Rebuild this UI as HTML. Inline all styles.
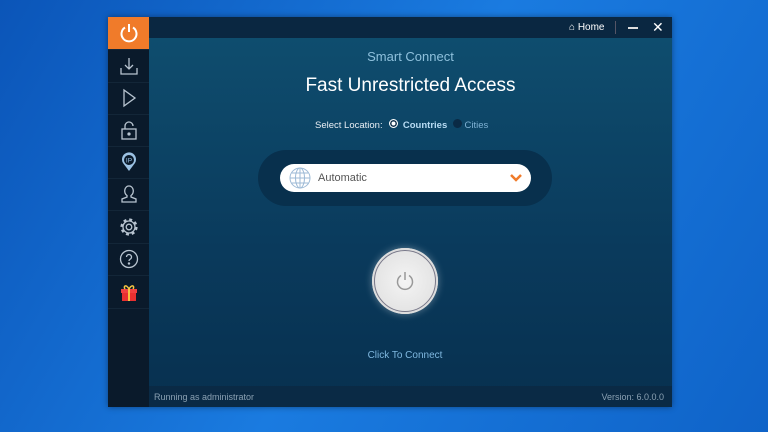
<!DOCTYPE html><html><head><style>
body{margin:0;width:768px;height:432px;overflow:hidden;background:linear-gradient(120deg,#0b55b8 0%,#1a7be0 50%,#0f63c8 100%);font-family:"Liberation Sans",sans-serif;position:relative}
.win{position:absolute;left:108px;top:17px;width:564px;height:390px;background:linear-gradient(#0f4f70,#0a3a5c 60%,#07304f);box-shadow:0 0 6px rgba(0,0,0,.4)}
.side{position:absolute;left:0;top:0;width:41px;height:390px;background:#0a1a2b}
.it{position:absolute;left:0;width:41px;height:32px;border-bottom:1px solid #132638;display:flex;align-items:center;justify-content:center}
.tb{position:absolute;left:41px;top:0;right:0;height:21px;background:#0a2741;color:#fff;font-size:10px}
.st{position:absolute;left:41px;bottom:0;right:0;height:21px;background:#0a2a45;color:#8aa0b2;font-size:9px}
.c{position:absolute;text-align:center}
</style></head><body>
<div class="win">
<div class="side">
<div class="it" style="top:0;background:#f07b2a"><svg width="22" height="22" viewBox="0 0 22 22" fill="none" stroke="#fff" stroke-width="2"><path d="M7 5.5A7.5 7.5 0 1 0 15 5.5"/><path d="M11 2v8"/></svg></div>
<div class="it" style="top:33px"><svg width="20" height="20" viewBox="0 0 20 20" fill="none" stroke="#b8c4d0" stroke-width="1.3"><path d="M10 2v11M6 9l4 4 4-4M2 12v6h16v-6"/></svg></div>
<div class="it" style="top:65px"><svg width="20" height="20" viewBox="0 0 20 20" fill="none" stroke="#b8c4d0" stroke-width="1.3"><path d="M5 2v16l11-8z"/></svg></div>
<div class="it" style="top:97px"><svg width="20" height="20" viewBox="0 0 20 20" fill="none" stroke="#b8c4d0" stroke-width="1.3"><rect x="3" y="9" width="14" height="10"/><path d="M6 9V6a4 4 0 0 1 8 0"/><circle cx="10" cy="14" r="1" fill="#b8c4d0"/></svg></div>
<div class="it" style="top:129px"><svg width="20" height="20" viewBox="0 0 20 20"><path d="M10 19l-6-8a7 7 0 1 1 12 0z" fill="#9cc2e4"/><circle cx="10" cy="8" r="5" fill="#0a1a2b"/><text x="10" y="10.5" font-size="6.5" fill="#9cc2e4" text-anchor="middle" font-family="Liberation Sans">IP</text></svg></div>
<div class="it" style="top:161px"><svg width="20" height="20" viewBox="0 0 20 20" fill="none" stroke="#b8c4d0" stroke-width="1.3"><path d="M10 2a4 5 0 0 0-2 9.5V13l-5 2v3h14v-3l-5-2v-1.5A4 5 0 0 0 10 2z"/></svg></div>
<div class="it" style="top:194px"><svg width="20" height="20" viewBox="0 0 20 20" fill="none" stroke="#b8c4d0"><circle cx="10" cy="10" r="2.8" stroke-width="1.3"/><circle cx="10" cy="10" r="6" stroke-width="1.3"/><circle cx="10" cy="10" r="7.3" stroke-width="2.6" stroke-dasharray="2.9 2.83"/></svg></div>
<div class="it" style="top:226px"><svg width="20" height="20" viewBox="0 0 20 20" fill="none" stroke="#b8c4d0" stroke-width="1.3"><circle cx="10" cy="10" r="8.5"/><path d="M7.5 8a2.5 2.5 0 1 1 3.5 2.3c-.7.4-1 .9-1 1.7"/><circle cx="10" cy="14.5" r=".6" fill="#b8c4d0"/></svg></div>
<div class="it" style="top:259px"><svg width="20" height="20" viewBox="0 0 20 20"><rect x="2" y="7" width="16" height="4" fill="#f04040"/><rect x="3" y="11" width="14" height="8" fill="#e83030"/><rect x="9" y="7" width="2" height="12" fill="#f5c542"/><path d="M10 7C7 2 4 4 6 7M10 7c3-5 6-3 4 0" fill="none" stroke="#f5c542" stroke-width="1.5"/></svg></div>
</div>
<div class="tb"><span style="position:absolute;left:420px;top:5px">&#8962; Home</span><span style="position:absolute;left:466px;top:4px;width:1px;height:13px;background:#556"></span><span style="position:absolute;left:479px;top:10px;width:10px;height:2px;background:#ddd"></span><span style="position:absolute;left:503px;top:2px;font-size:14px">✕</span></div>
<div class="c" style="left:41px;right:0;top:32px;font-size:13px;color:#8ec0dc">Smart Connect</div>
<div class="c" style="left:41px;right:0;top:58px;font-size:19px;color:#fff">Fast Unrestricted Access</div>
<div style="position:absolute;left:207px;top:102px;font-size:9.5px;color:#e8eef4">Select Location: <span style="display:inline-block;width:7px;height:7px;border-radius:50%;border:1px solid #fff;margin:0 2px 0 4px;box-shadow:inset 0 0 0 1.5px #0a2a45;background:#fff"></span> <b style="color:#b8dcf4">Countries</b> <span style="display:inline-block;width:9px;height:9px;border-radius:50%;background:#0a2a45;margin-left:3px"></span> <span style="color:#7fb2d4">Cities</span></div>
<div style="position:absolute;left:150px;top:133px;width:294px;height:56px;border-radius:28px;background:#08304d"></div>
<div style="position:absolute;left:172px;top:147px;width:251px;height:28px;border-radius:14px;background:#fff"><svg style="position:absolute;left:9px;top:3px" width="22" height="22" viewBox="0 0 22 22" fill="none" stroke="#9dbad6" stroke-width="1"><circle cx="11" cy="11" r="10"/><ellipse cx="11" cy="11" rx="4.5" ry="10"/><path d="M1 11h20M3 6h16M3 16h16M11 1v20"/></svg><span style="position:absolute;left:38px;top:8px;font-size:11px;color:#555">Automatic</span><svg style="position:absolute;left:229px;top:9px" width="14" height="10" viewBox="0 0 14 10" fill="none" stroke="#f07b2a" stroke-width="2.5"><path d="M2 2l5 5 5-5"/></svg></div>
<div style="position:absolute;left:264px;top:231px;width:66px;height:66px;border-radius:50%;background:radial-gradient(#f4f4f4,#dcdcdc);box-shadow:0 0 0 2px #ddd inset,0 0 8px rgba(255,255,255,.35)"><div style="position:absolute;inset:2px;border-radius:50%;border:1.5px solid #778"></div><svg style="position:absolute;left:22px;top:22px" width="22" height="22" viewBox="0 0 22 22" fill="none" stroke="#999" stroke-width="1.5"><path d="M7 5.5A7.5 7.5 0 1 0 15 5.5"/><path d="M11 2v8"/></svg></div>
<div class="c" style="left:250px;width:94px;top:333px;font-size:10px;color:#7fb8e0">Click To Connect</div>
<div class="st"><span style="position:absolute;left:5px;top:6px">Running as administrator</span><span style="position:absolute;right:8px;top:6px">Version:  6.0.0.0</span></div>
</div>
</body></html>
